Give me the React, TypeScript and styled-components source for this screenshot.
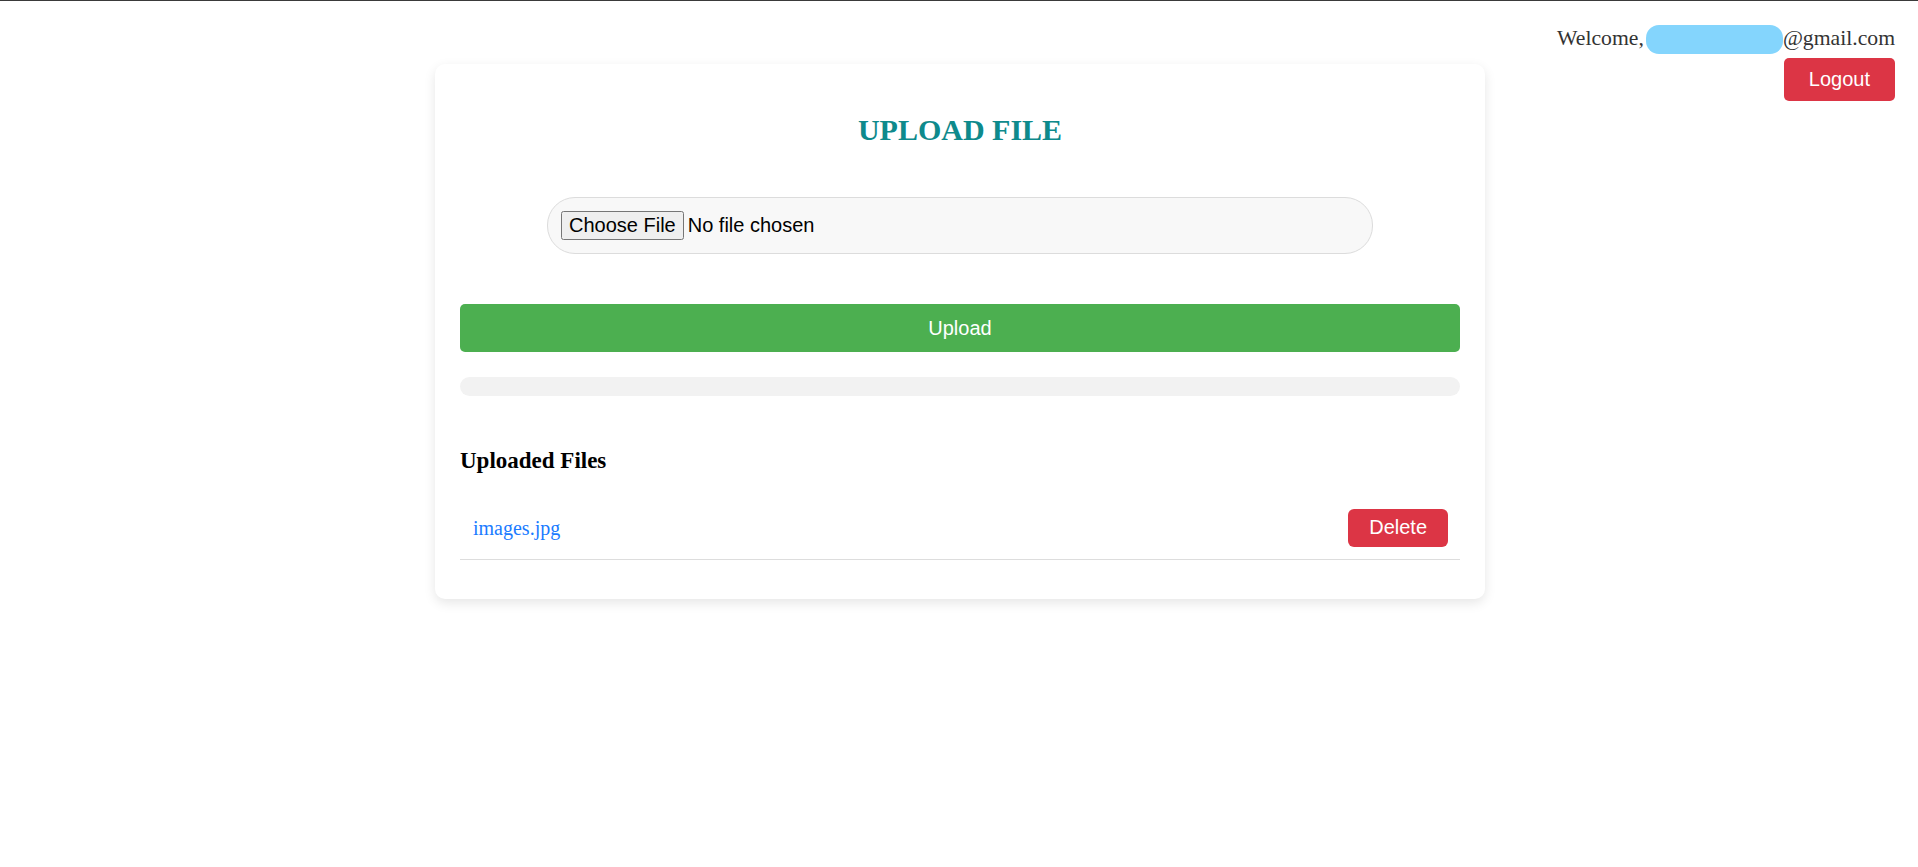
import React from "react";
import styled, { createGlobalStyle } from "styled-components";

const GlobalStyle = createGlobalStyle`
  html, body {
    margin: 0;
    padding: 0;
    background: #ffffff;
  }
  body {
    border-top: 1px solid #3a3a3a;
    font-family: "Liberation Serif", "Times New Roman", serif;
    color: #000;
  }
  * { box-sizing: border-box; }
`;

const Page = styled.div`
  display: grid;
  grid-template-columns: minmax(0, 1fr) 1050px minmax(0, 1fr);
  align-items: start;
  padding-left: 2px;
  min-height: 866px;
`;

const Header = styled.div`
  grid-column: 3;
  grid-row: 1;
  justify-self: end;
  display: flex;
  flex-direction: column;
  align-items: flex-end;
  padding: 24px 23px 0 0;
`;

const Welcome = styled.div`
  font-family: "Liberation Serif", "Times New Roman", serif;
  font-size: 21.7px;
  line-height: 25px;
  color: #333;
  white-space: nowrap;
`;

const Redacted = styled.span`
  display: inline-block;
  width: 137px;
  height: 29px;
  margin-left: 2px;
  background: #84d5fd;
  border-radius: 13px;
  vertical-align: -9px;
`;

const DangerButton = styled.button<{ $size: "lg" | "sm" }>`
  font-family: "Liberation Sans", Arial, sans-serif;
  font-size: 20px;
  line-height: 23px;
  color: #fff;
  background: #dc3545;
  border: none;
  border-radius: ${(p) => (p.$size === "lg" ? "5px" : "6px")};
  padding: ${(p) => (p.$size === "lg" ? "10px 25px" : "7px 21px 8px")};
  cursor: pointer;
`;

const LogoutButton = styled(DangerButton)`
  margin-top: 4px;
`;

const Card = styled.main`
  grid-column: 2;
  grid-row: 1;
  margin-top: 63px;
  background: #fff;
  border-radius: 10px;
  box-shadow: 0 4px 12px rgba(0, 0, 0, 0.1);
  padding: 20px 25px 39px;
  display: flex;
  flex-direction: column;
`;

const Title = styled.h2`
  margin: 28px 0 50px;
  text-align: center;
  font-family: "Liberation Serif", "Times New Roman", serif;
  font-size: 30px;
  line-height: 35px;
  font-weight: bold;
  color: #0e8a8c;
`;

const FileRow = styled.div`
  display: flex;
  justify-content: center;
`;

const FileInput = styled.input`
  width: 826px;
  padding: 13px 13px;
  border: 1px solid #dcdcdc;
  border-radius: 28px;
  background: #f8f8f8;
  font-family: "Liberation Sans", Arial, sans-serif;
  font-size: 20px;
  color: #000;
`;

const UploadButton = styled.button`
  margin-top: 50px;
  width: 100%;
  height: 48px;
  border: none;
  border-radius: 5px;
  background: #4caf50;
  color: #fff;
  font-family: "Liberation Sans", Arial, sans-serif;
  font-size: 20px;
  cursor: pointer;
`;

const Progress = styled.div`
  margin-top: 25px;
  height: 19px;
  border-radius: 10px;
  background: #f2f2f2;
  overflow: hidden;
`;

const ProgressFill = styled.div`
  height: 100%;
  background: #4caf50;
`;

const SectionTitle = styled.h3`
  margin: 52px 0 22px;
  font-family: "Liberation Serif", "Times New Roman", serif;
  font-size: 23px;
  line-height: 26.5px;
  font-weight: bold;
  color: #000;
`;

const FileList = styled.ul`
  list-style: none;
  margin: 0;
  padding: 0;
`;

const FileItem = styled.li`
  display: flex;
  align-items: center;
  justify-content: space-between;
  padding: 12px 12px 12px 13px;
  border-bottom: 1px solid #dddddd;
`;

const FileLink = styled.a`
  font-family: "Liberation Serif", "Times New Roman", serif;
  font-size: 20px;
  color: #1a7bff;
  text-decoration: none;
  position: relative;
  top: 1px;
`;

const files = ["images.jpg"];

export default function App() {
  const progress = 0;
  return (
    <>
      <GlobalStyle />
      <Page>
        <Header>
          <Welcome>
            Welcome,<Redacted />@gmail.com
          </Welcome>
          <LogoutButton $size="lg">Logout</LogoutButton>
        </Header>
        <Card>
          <Title>UPLOAD FILE</Title>
          <FileRow>
            <FileInput type="file" />
          </FileRow>
          <UploadButton>Upload</UploadButton>
          <Progress>
            <ProgressFill style={{ width: `${progress}%` }} />
          </Progress>
          <SectionTitle>Uploaded Files</SectionTitle>
          <FileList>
            {files.map((f) => (
              <FileItem key={f}>
                <FileLink href="#">{f}</FileLink>
                <DangerButton $size="sm">Delete</DangerButton>
              </FileItem>
            ))}
          </FileList>
        </Card>
      </Page>
    </>
  );
}
